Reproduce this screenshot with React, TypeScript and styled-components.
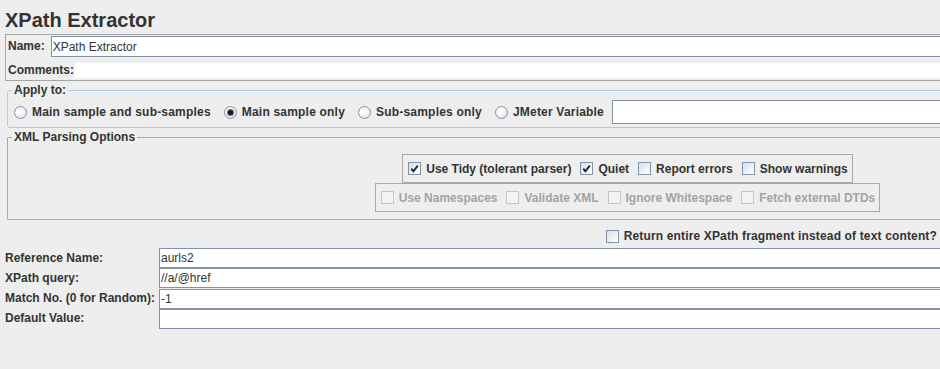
import React from 'react'
import styled, { createGlobalStyle } from 'styled-components'

const BLEED = '-308px'

const GlobalStyle = createGlobalStyle`
  html, body {
    margin: 0;
    background: #eeeeee;
    overflow: hidden;
  }
  body {
    font-family: "Liberation Sans", Arial, sans-serif;
    font-size: 12px;
    color: #333333;
  }
`

const Page = styled.div`
  width: 940px;
  height: 369px;
  overflow: hidden;
  display: flex;
  flex-direction: column;
`

const Title = styled.h1`
  margin: 8px 0 0 5px;
  font-size: 20px;
  line-height: 24px;
  font-weight: bold;
  color: #333;
`

const NamePanel = styled.div`
  margin: 2px ${BLEED} 0 5px;
  border: 1px solid #a6a6a6;
  padding: 1px 0 2px 2px;
  display: flex;
  flex-direction: column;
  gap: 6px;
`

const Row = styled.div<{ $gap: number }>`
  display: flex;
  align-items: center;
  gap: ${(p) => p.$gap}px;
`

const Label = styled.span`
  font-weight: bold;
  white-space: nowrap;
  line-height: 15px;
`

const TextField = styled.input<{ $h?: number }>`
  flex: 1;
  min-width: 0;
  height: ${(p) => p.$h || 21}px;
  box-sizing: border-box;
  border: 1px solid #8393a6;
  background: #ffffff;
  padding: 0 0 0 1px;
  margin: 0;
  font-family: "Liberation Sans", Arial, sans-serif;
  font-size: 12px;
  color: #333;
  outline: none;
`

const CommentsArea = styled.div`
  flex: 1;
  height: 15px;
  background: #ffffff;
`

const Group = styled.fieldset<{ $tone: 'blue' | 'grey' }>`
  margin: 2px ${BLEED} 0 7px;
  min-width: 0;
  border: 1px solid ${(p) => (p.$tone === 'blue' ? '#b3cbe2' : '#a9a9a9')};
  border-radius: ${(p) => (p.$tone === 'blue' ? '3px' : '1px')};
  padding: 2px 6px 3px 6px;
`

const XmlGroup = styled(Group)`
  padding: 9px 6px 7px 6px;
  display: flex;
  flex-direction: column;
  align-items: center;
`

const Legend = styled.legend`
  margin-left: -2px;
  padding: 0 2px;
  font-weight: bold;
  line-height: 15px;
`

const RadioRow = styled.div`
  display: flex;
  align-items: center;
  letter-spacing: 0.2px;
`

const Choice = styled.label<{ $disabled?: boolean; $space?: number }>`
  display: flex;
  align-items: center;
  gap: 5px;
  margin-right: ${(p) => p.$space ?? 13}px;
  font-weight: bold;
  white-space: nowrap;
  color: ${(p) => (p.$disabled ? '#a3a3a3' : '#333')};
`

const RadioDot = styled.span<{ $on?: boolean }>`
  position: relative;
  width: 13px;
  height: 13px;
  box-sizing: border-box;
  border-radius: 50%;
  border: 1px solid #8093a8;
  background: radial-gradient(circle at 40% 35%, #ffffff 0%, #f2f5f8 45%, #cdd7e2 100%);
  flex: none;
  &::after {
    content: '';
    display: ${(p) => (p.$on ? 'block' : 'none')};
    position: absolute;
    left: 3px;
    top: 3px;
    width: 5px;
    height: 5px;
    border-radius: 50%;
    background: #1a1a1a;
    box-shadow: 0 0 0 1px #6d6d6d;
  }
`

const CheckBox = styled.span<{ $disabled?: boolean }>`
  width: 13px;
  height: 13px;
  box-sizing: border-box;
  flex: none;
  border: 1px solid ${(p) => (p.$disabled ? '#c5c5c5' : '#8094aa')};
  background: ${(p) =>
    p.$disabled
      ? '#f3f3f3'
      : 'linear-gradient(135deg, #d5dee8 0%, #eef2f6 55%, #ffffff 100%)'};
  display: flex;
  align-items: center;
  justify-content: center;
`

const OptionBox = styled.div`
  display: flex;
  align-items: center;
  height: 29px;
  box-sizing: border-box;
  border: 1px solid #a9a9a9;
  padding: 0 4px 0 5px;
`

const ReturnRow = styled.div`
  margin-top: 7px;
  height: 18px;
  display: flex;
  justify-content: flex-end;
  align-items: center;
  padding-right: 3px;
  letter-spacing: 0.15px;
`

const FieldGrid = styled.div`
  margin: 3px ${BLEED} 0 5px;
  display: grid;
  grid-template-columns: 154px 1fr;
  grid-auto-rows: 20px;
  row-gap: 0.34px;
  align-items: center;
`

function Check({ checked, disabled }: { checked?: boolean; disabled?: boolean }) {
  return (
    <CheckBox $disabled={disabled}>
      {checked ? (
        <svg width="9" height="9" viewBox="0 0 9 9">
          <path d="M1.3 4.6 L3.4 7.2 L7.8 1.6" fill="none" stroke="#1e1e1e" strokeWidth="1.8" />
        </svg>
      ) : null}
    </CheckBox>
  )
}

const radios = [
  { id: 1, name: 'Main sample and sub-samples', on: false },
  { id: 2, name: 'Main sample only', on: true },
  { id: 3, name: 'Sub-samples only', on: false },
  { id: 4, name: 'JMeter Variable', on: false },
]

const parsingOpts = [
  { id: 1, name: 'Use Tidy (tolerant parser)', on: true },
  { id: 2, name: 'Quiet', on: true },
  { id: 3, name: 'Report errors', on: false },
  { id: 4, name: 'Show warnings', on: false },
]

const xmlOpts = ['Use Namespaces', 'Validate XML', 'Ignore Whitespace', 'Fetch external DTDs']

const fields = [
  { id: 1, label: 'Reference Name:', value: 'aurls2' },
  { id: 2, label: 'XPath query:', value: '//a/@href' },
  { id: 3, label: 'Match No. (0 for Random):', value: '-1' },
  { id: 4, label: 'Default Value:', value: '' },
]

export default function App() {
  return (
    <Page>
      <GlobalStyle />
      <Title>XPath Extractor</Title>

      <NamePanel>
        <Row $gap={6}>
          <Label>Name:</Label>
          <TextField readOnly value="XPath Extractor" />
        </Row>
        <Row $gap={1}>
          <Label>Comments:</Label>
          <CommentsArea />
        </Row>
      </NamePanel>

      <Group $tone="blue">
        <Legend>Apply to:</Legend>
        <RadioRow>
          {radios.map((r) => (
            <Choice key={r.id} $space={r.id === 4 ? 8 : 13}>
              <RadioDot $on={r.on} />
              {r.name}
            </Choice>
          ))}
          <TextField readOnly value="" $h={24} />
        </RadioRow>
      </Group>

      <XmlGroup $tone="grey">
        <Legend>XML Parsing Options</Legend>
        <OptionBox>
          {parsingOpts.map((o, i) => (
            <Choice key={o.id} $space={i === parsingOpts.length - 1 ? 0 : 9}>
              <Check checked={o.on} />
              {o.name}
            </Choice>
          ))}
        </OptionBox>
        <OptionBox>
          {xmlOpts.map((o, i) => (
            <Choice key={o} $disabled $space={i === xmlOpts.length - 1 ? 0 : 9}>
              <Check disabled />
              {o}
            </Choice>
          ))}
        </OptionBox>
      </XmlGroup>

      <ReturnRow>
        <Choice $space={0}>
          <Check />
          Return entire XPath fragment instead of text content?
        </Choice>
      </ReturnRow>

      <FieldGrid>
        {fields.map((f) => (
          <React.Fragment key={f.id}>
            <Label>{f.label}</Label>
            <TextField readOnly value={f.value} $h={20} />
          </React.Fragment>
        ))}
      </FieldGrid>
    </Page>
  )
}
